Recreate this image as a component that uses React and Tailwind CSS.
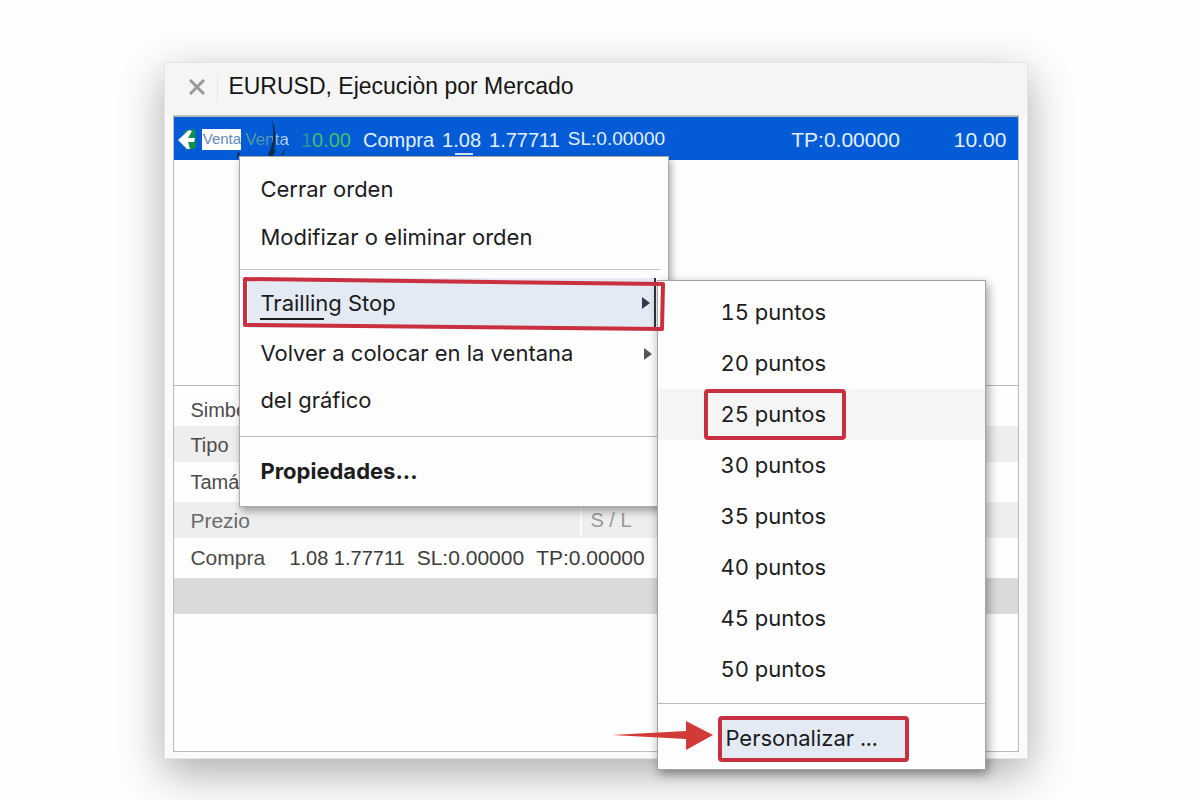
import React, { useState } from 'react';

const POINTS = [15, 20, 25, 30, 35, 40, 45, 50];

const OrderBar = () => (
  <div className="relative flex h-[43px] items-center bg-[#035cd6] pl-1 pr-3 pt-0.5 text-xl whitespace-nowrap text-[#e4f0ff]">
    <svg className="h-6 w-5 shrink-0" viewBox="0 0 20 24" fill="none">
      <path d="M6 3L17 1L18 20L8 22Z" fill="#14904a" />
      <path d="M0 12L11 2L14 3L10 10L17 10L16 14L10 14L12 21L9 21Z" fill="#fff" />
    </svg>
    <span className="ml-1 h-[21px] w-[39px] shrink-0 bg-white text-center text-[15px] leading-5 text-[#6088c0]">Venta</span>
    <span className="ml-1 bg-gradient-to-r from-[#4ba58f] via-[#5b98b0] to-[#d5e6fb] bg-clip-text text-[17px] text-transparent">Venta</span>
    <span className="ml-3 text-[#3fbf6c]">
      <span className="text-[#2c93a0]">1</span>0.00
    </span>
    <span className="ml-3">Compra</span>
    <span className="ml-2">1.08</span>
    <span className="ml-2">1.77711</span>
    <span className="ml-2 text-[19px]">SL:0.00000</span>
    <span className="ml-auto text-[21px]">TP:0.00000</span>
    <span className="ml-[54px] text-[21px]">10.00</span>
    <svg className="absolute left-[60px] top-0 h-full w-[60px]" viewBox="0 0 60 43">
      <path d="M38 3C42 12 43 24 38 40L34 38C40 26 40 16 38 3Z" fill="#0c2a4c" />
      <path d="M42 32C41 36 39 39 36 41L35 37ZM52 31L47 38L49 38ZM5 34L2 41L6 38Z" fill="#102f3d" />
    </svg>
    <span className="absolute left-[281px] top-9 h-0.5 w-[18px] bg-[#d8eaff]" />
  </div>
);

const OrderTable = () => (
  <table className="w-full table-fixed border-t border-[#bbb] text-left text-xl text-[#4c4c4c]">
    <colgroup>
      <col className="w-[115px]" />
      <col className="w-[292px]" />
      <col />
    </colgroup>
    <tbody>
      <tr className="h-10">
        <th scope="row" className="pl-4 pt-2 font-normal">Simbolo</th>
        <td colSpan={2} />
      </tr>
      <tr className="h-9 bg-[#eee]">
        <th scope="row" className="pl-4 pt-0.5 font-normal">Tipo</th>
        <td colSpan={2} />
      </tr>
      <tr className="h-10">
        <th scope="row" className="pl-4 font-normal">Tamáño</th>
        <td colSpan={2} />
      </tr>
      <tr className="h-9 bg-[#eee] text-[#6a6a6a]">
        <th scope="row" className="pl-4 pt-0.5 text-[21px] font-normal">Prezio</th>
        <td />
        <td className="border-l-2 border-[#fafafa] pl-2 text-[#999]">S / L</td>
      </tr>
      <tr className="h-10">
        <th scope="row" className="pl-4 text-[21px] font-normal">Compra</th>
        <td colSpan={2} className="text-[#3c3c3c]">
          <div className="flex items-baseline whitespace-nowrap">
            <span>1.08 1.77711</span>
            <span className="ml-3 text-[21px]">SL:0.00000</span>
            <span className="ml-3 text-[21px]">TP:0.00000</span>
          </div>
        </td>
      </tr>
      <tr className="h-9 bg-[#dadada]">
        <td colSpan={3} />
      </tr>
    </tbody>
  </table>
);

const Caret = ({ className }) => (
  <svg className={className} width="8" height="12" viewBox="0 0 8 12">
    <path d="M0 0L8 6L0 12Z" fill="currentColor" />
  </svg>
);

const ContextMenu = () => (
  <div className="absolute left-[74px] top-[93px] w-[430px] border border-[#aaa] bg-[#fefefe] font-['Inter',sans-serif] text-[22px] text-[#1c1c1e] shadow-[2px_4px_8px_rgba(0,0,0,0.35)]">
    <div className="pt-2 pb-2">
      <button type="button" className="block h-12 w-full pl-5 text-left">Cerrar orden</button>
      <button type="button" className="block h-12 w-full pl-5 text-left">Modifizar o eliminar orden</button>
    </div>
    <hr className="mr-2 border-[#c4c4c4]" />
    <div className="relative mt-2 h-[52px]">
      <button type="button" className="relative ml-2 flex h-[50px] w-[408px] items-center border-r-2 border-[#333] bg-[#e3eaf3] pl-3">
        Trailling Stop
        <Caret className="ml-auto mr-1 text-[#333c4a]" />
        <span className="absolute bottom-2 left-3 h-0.5 w-16 bg-[#1c1c1e]" />
      </button>
      <svg className="absolute left-[2px] top-0 z-10 overflow-visible" width="424" height="54" viewBox="0 0 424 54" fill="none">
        <path d="M3 1L421 6L420 51L3 47Z" stroke="#c9303f" strokeWidth="4" strokeLinejoin="round" />
      </svg>
    </div>
    <button type="button" className="flex w-full items-start pl-5 text-left leading-[47px]">
      <span>
        Volver a colocar en la ventana
        <br />
        del gráfico
      </span>
      <Caret className="mt-[18px] mr-4 ml-auto text-[#555]" />
    </button>
    <hr className="mt-3 border-[#bbb]" />
    <button type="button" className="block h-[69px] w-full pl-5 text-left font-bold">Propiedades...</button>
  </div>
);

const PointsMenu = ({ selected, onSelect }) => (
  <div className="absolute left-[492px] top-[217px] w-[329px] border border-[#a4a4a4] bg-[#fefefe] pt-1.5 font-['Inter',sans-serif] text-[22px] text-[#1c1c1e] tabular-nums shadow-[2px_4px_10px_rgba(0,0,0,0.4)]">
    {POINTS.map((value) => (
      <div key={value} className={value === selected ? 'bg-[#f5f5f5]' : ''}>
        <button
          type="button"
          onClick={() => onSelect(value)}
          className={`ml-[46px] flex h-[51px] w-[142px] items-center border-4 pl-3 whitespace-nowrap ${
            value === selected ? 'rounded-sm border-[#c9303f]' : 'border-transparent'
          }`}
        >
          {value} puntos
        </button>
      </div>
    ))}
    <hr className="mt-2 border-[#bbb]" />
    <div className="relative pt-3 pb-[7px]">
      <button type="button" className="ml-[60px] flex h-[46px] w-[191px] items-center rounded-sm border-4 border-[#c9303f] bg-[#e3eaf3] pb-0.5 pl-[3px]">
        Personalizar ...
      </button>
      <svg className="absolute left-[-46px] top-[17px]" width="101" height="29" viewBox="0 0 101 29">
        <path d="M0 14L74 10V0L101 14L74 29V18Z" fill="#d23a38" />
      </svg>
    </div>
  </div>
);

const App = () => {
  const [selected, setSelected] = useState(25);

  return (
    <div className="min-h-screen bg-[#fdfdfd] pt-[62px] pr-[14.3%] pb-10 pl-[13.7%] font-['Liberation_Sans',Arial,sans-serif]">
      <div className="relative border border-[#e4e4e4] bg-[#fafafa] shadow-[0_14px_40px_rgba(0,0,0,0.32)]">
        <div className="flex h-[52px] items-center bg-[#f5f5f5] pl-6">
          <button type="button" aria-label="Cerrar" className="pb-1 text-[#999]">
            <svg width="16" height="16" viewBox="0 0 16 16" stroke="currentColor" strokeWidth="3">
              <path d="M1 1L15 15M15 1L1 15" />
            </svg>
          </button>
          <span className="ml-3 h-7 w-px bg-[#e6e6e6]" />
          <h1 className="ml-2.5 pb-1.5 text-[23px] text-[#151515]">EURUSD, Ejecuciòn por Mercado</h1>
        </div>
        <div className="mx-2 mb-[6px] min-h-[637px] border border-t-2 border-[#bcbcbc] bg-[#fefefe]">
          <OrderBar />
          <div className="h-[225px]" />
          <OrderTable />
        </div>
        <ContextMenu />
        <PointsMenu selected={selected} onSelect={setSelected} />
      </div>
    </div>
  );
};

export default App;
